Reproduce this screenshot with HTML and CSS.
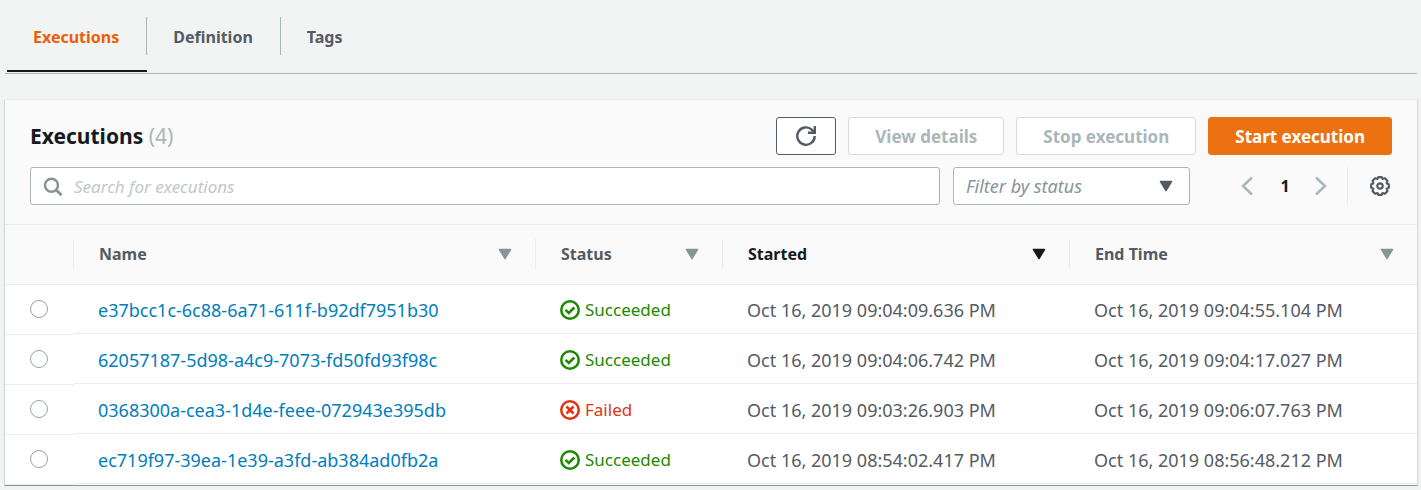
FILE: index.html
```html
<!DOCTYPE html>
<html lang="en">
<head>
<meta charset="utf-8">
<title>Executions</title>
<link rel="stylesheet" href="styles.css">
</head>
<body>
<svg class="symbols" aria-hidden="true">
  <symbol id="caret" viewBox="0 0 14 12"><path d="M1.500 1.500h11L7 10.500z" fill="currentColor" stroke="currentColor" stroke-width="1.500" stroke-linejoin="round"/></symbol>
  <symbol id="ok" viewBox="0 0 20 20"><circle cx="10" cy="10" r="8.750" fill="none" stroke="currentColor" stroke-width="2.500"/><path d="M5.500 9.800l3.300 3.200 5.600-5.500" fill="none" stroke="currentColor" stroke-width="2.500"/></symbol>
  <symbol id="bad" viewBox="0 0 20 20"><circle cx="10" cy="10" r="8.750" fill="none" stroke="currentColor" stroke-width="2.500"/><path d="M6.500 6.500l7 7M13.500 6.500l-7 7" fill="none" stroke="currentColor" stroke-width="2.700"/></symbol>
</svg>
<nav class="tabs">
  <a class="tab tab-active" href="#executions"><span>Executions</span></a>
  <a class="tab" href="#definition"><span>Definition</span></a>
  <a class="tab" href="#tags"><span>Tags</span></a>
</nav>
<main class="panel">
  <header class="panel-head">
    <div class="title-row">
      <h1 class="title">Executions <span class="count">(4)</span></h1>
      <div class="actions">
        <button class="btn btn-icon" type="button" aria-label="Refresh">
          <svg width="22" height="22" viewBox="0 0 22 22" fill="none" stroke="currentColor" stroke-width="2.400"><path d="M19.700 11a8.700 8.700 0 1 1-2.700-6.200l2.500 2.500"/><path d="M19.800 1v6.800H13"/></svg>
        </button>
        <button class="btn" type="button" disabled>View details</button>
        <button class="btn" type="button" disabled>Stop execution</button>
        <button class="btn btn-primary" type="button">Start execution</button>
      </div>
    </div>
    <div class="filter-row">
      <div class="search">
        <svg class="search-icon" width="20" height="20" viewBox="0 0 20 20" fill="none" stroke="currentColor" stroke-width="2.500"><circle cx="8.500" cy="8.300" r="6.500"/><path d="M13 12.800l5.500 5.400" stroke-width="3"/></svg>
        <input class="search-input" type="text" aria-label="Search for executions" placeholder="Search for executions">
      </div>
      <div class="filter">
        <select class="filter-select" aria-label="Filter by status"><option>Filter by status</option></select>
        <svg class="filter-caret" width="14" height="12"><use href="#caret"/></svg>
      </div>
      <div class="pager">
        <button class="pager-btn pager-prev" type="button" aria-label="Previous page"><svg width="14" height="20" viewBox="0 0 14 20" fill="none" stroke="currentColor" stroke-width="2.500"><path d="M12 1.500L3 10l9 8.500"/></svg></button>
        <button class="pager-btn pager-page" type="button">1</button>
        <button class="pager-btn pager-next" type="button" aria-label="Next page"><svg width="14" height="20" viewBox="0 0 14 20" fill="none" stroke="currentColor" stroke-width="2.500"><path d="M2 1.500L11 10l-9 8.500"/></svg></button>
        <button class="pager-btn pager-settings" type="button" aria-label="Preferences"><svg width="20" height="20" viewBox="0 0 20 20" fill="none" stroke="currentColor" stroke-width="2.200" stroke-linejoin="round"><path d="M8.300 1.200h3.400l.7 1.700 2.500-.7 2.500 2.600-.7 2.500 2.100.9v3.600l-2.100.9.7 2.500-2.500 2.600-2.500-.7-.7 1.700H8.300l-.7-1.700-2.500.7-2.500-2.600.7-2.500-2.100-.9V8.200l2.100-.9-.7-2.500 2.500-2.600 2.500.7z"/><circle cx="10" cy="10" r="2.700"/></svg></button>
      </div>
    </div>
  </header>
  <table class="grid">
    <colgroup><col class="col-pick"><col class="col-name"><col class="col-status"><col class="col-time"><col class="col-time"></colgroup>
    <thead>
      <tr>
        <th><div class="head-cell"></div></th>
        <th><button class="head-cell" type="button">Name<svg width="14" height="12"><use href="#caret"/></svg></button></th>
        <th><button class="head-cell" type="button">Status<svg width="14" height="12"><use href="#caret"/></svg></button></th>
        <th><button class="head-cell head-sorted" type="button">Started<svg width="14" height="12"><use href="#caret"/></svg></button></th>
        <th><button class="head-cell" type="button">End Time<svg width="14" height="12"><use href="#caret"/></svg></button></th>
      </tr>
    </thead>
    <tbody>
      <tr>
        <td><input class="pick" type="radio" name="run" aria-label="Select e37bcc1c-6c88-6a71-611f-b92df7951b30"></td>
        <td><a class="link" href="#e37bcc1c">e37bcc1c-6c88-6a71-611f-b92df7951b30</a></td>
        <td><span class="status status-ok"><svg width="20" height="20"><use href="#ok"/></svg>Succeeded</span></td>
        <td>Oct 16, 2019 09:04:09.636 PM</td>
        <td>Oct 16, 2019 09:04:55.104 PM</td>
      </tr>
      <tr>
        <td><input class="pick" type="radio" name="run" aria-label="Select 62057187-5d98-a4c9-7073-fd50fd93f98c"></td>
        <td><a class="link" href="#62057187">62057187-5d98-a4c9-7073-fd50fd93f98c</a></td>
        <td><span class="status status-ok"><svg width="20" height="20"><use href="#ok"/></svg>Succeeded</span></td>
        <td>Oct 16, 2019 09:04:06.742 PM</td>
        <td>Oct 16, 2019 09:04:17.027 PM</td>
      </tr>
      <tr>
        <td><input class="pick" type="radio" name="run" aria-label="Select 0368300a-cea3-1d4e-feee-072943e395db"></td>
        <td><a class="link" href="#0368300a">0368300a-cea3-1d4e-feee-072943e395db</a></td>
        <td><span class="status status-bad"><svg width="20" height="20"><use href="#bad"/></svg>Failed</span></td>
        <td>Oct 16, 2019 09:03:26.903 PM</td>
        <td>Oct 16, 2019 09:06:07.763 PM</td>
      </tr>
      <tr>
        <td><input class="pick" type="radio" name="run" aria-label="Select ec719f97-39ea-1e39-a3fd-ab384ad0fb2a"></td>
        <td><a class="link" href="#ec719f97">ec719f97-39ea-1e39-a3fd-ab384ad0fb2a</a></td>
        <td><span class="status status-ok"><svg width="20" height="20"><use href="#ok"/></svg>Succeeded</span></td>
        <td>Oct 16, 2019 08:54:02.417 PM</td>
        <td>Oct 16, 2019 08:56:48.212 PM</td>
      </tr>
    </tbody>
  </table>
</main>
</body>
</html>
```
FILE: styles.css
```css
* { box-sizing: border-box; }

body {
  margin: 0;
  padding: 0 3px 0 4px;
  background: #f2f3f3;
  color: #545b64;
  font: 16px/24px "Noto Sans", "Open Sans", sans-serif;
}

button, input, select { font: inherit; color: inherit; }
svg { display: block; flex: none; }
.symbols { display: none; }

.tabs {
  display: flex;
  margin: 0 1px;
  padding-left: 2px;
  border-bottom: 1px solid #aab7b8;
}
.tab {
  padding: 17px 0 15px;
  border-bottom: 2px solid transparent;
  color: #545b64;
  font-weight: 700;
  text-decoration: none;
  margin-bottom: 1px;
}
.tab span {
  display: block;
  padding: 8px 27px 6px 26px;
  border-right: 1px solid #aab7b8;
}
.tab:last-child span { border-right: 0; }
.tab-active { color: #eb5f07; border-bottom-color: #16191f; }

.panel {
  margin-top: 25px;
  background: #fff;
  border: 1px solid #d5dbdb;
  border-top-color: #eaeded;
  border-bottom-color: #879596;
  box-shadow: 0 1px 1px #d5dbdb;
}
.panel-head {
  display: grid;
  gap: 12px;
  padding: 17px 25px 19px;
  background: #fafafa;
  border-bottom: 1px solid #eaeded;
}
.title-row, .filter-row, .actions, .pager {
  display: flex;
  align-items: center;
}
.title-row { justify-content: space-between; }
.title {
  margin: 0;
  color: #16191f;
  font-size: 21px;
  line-height: 38px;
  font-weight: 700;
}
.count { color: #aab7b8; font-weight: 400; }
.actions { gap: 12px; }
.filter-row { gap: 13px; }

.btn {
  height: 38px;
  padding: 2px 26px 0;
  border: 1px solid #545b64;
  border-radius: 3px;
  background: #fff;
  font-size: 17px;
  font-weight: 700;
}
.btn:disabled { color: #aab7b8; border-color: #d5dbdb; }
.btn-icon { padding: 0 18px; }
.btn-primary { background: #ec7211; border-color: #ec7211; color: #fff; }

.search { position: relative; flex: 1; }
.search-icon { position: absolute; left: 13px; top: 10px; color: #879596; }
.search-input, .filter-select {
  display: block;
  width: 100%;
  height: 38px;
  border: 1px solid #aab7b8;
  border-radius: 3px;
  background: #fff;
  font-style: italic;
}
.search-input { padding: 0 12px 0 43px; font-size: 17px; }
.search-input::placeholder { color: #bfc8c8; opacity: 1; }
.filter { position: relative; width: 237px; }
.filter-select { appearance: none; padding: 0 12px; color: #879596; font-size: 18px; }
.filter-caret { position: absolute; right: 17px; top: 13px; color: #545b64; pointer-events: none; }

.pager { margin-left: 37px; }
.pager-btn {
  display: flex;
  align-items: center;
  justify-content: center;
  height: 38px;
  padding: 0;
  border: 0;
  background: none;
  color: #aab7b8;
}
.pager-prev { width: 26px; justify-content: flex-start; }
.pager-page { width: 38px; color: #16191f; font-weight: 700; }
.pager-next { width: 34px; }
.pager-settings {
  width: 45px;
  margin-left: 9px;
  padding-right: 2px;
  justify-content: flex-end;
  border-left: 1px solid #eaeded;
  color: #545b64;
}

.grid {
  width: 100%;
  table-layout: fixed;
  border-spacing: 0;
}
.col-pick { width: 69px; }
.col-status { width: 187px; }
.col-time { width: 347px; }
.grid th {
  padding: 14px 0 15px;
  background: #fafafa;
  border-bottom: 1px solid #eaeded;
}
.head-cell {
  display: flex;
  align-items: center;
  justify-content: space-between;
  width: 100%;
  height: 30px;
  padding: 0 23px 0 25px;
  border: 0;
  border-right: 1px solid #eaeded;
  background: none;
  font-weight: 700;
}
.grid th:last-child .head-cell { border-right: 0; }
.head-cell svg { color: #879596; }
.head-sorted, .head-sorted svg { color: #16191f; }
.grid td {
  height: 50px;
  padding: 0 24px;
  vertical-align: middle;
  font-size: 18px;
  box-shadow: inset 0 -1px #fff, inset 0 -2px #eaeded;
}
.grid td:first-child { padding-left: 25px; box-shadow: inset 0 -1px #eaeded; }
.pick {
  appearance: none;
  display: block;
  width: 18px;
  height: 18px;
  margin: 0 0 2px;
  border: 1px solid #95a3a4;
  border-radius: 50%;
  background: #fff;
}
.link { color: #007dbc; text-decoration: none; }
.status { display: flex; align-items: center; gap: 5px; font-size: 17px; }
.status-ok { color: #1d8900; }
.status-bad { color: #df3312; }
```
